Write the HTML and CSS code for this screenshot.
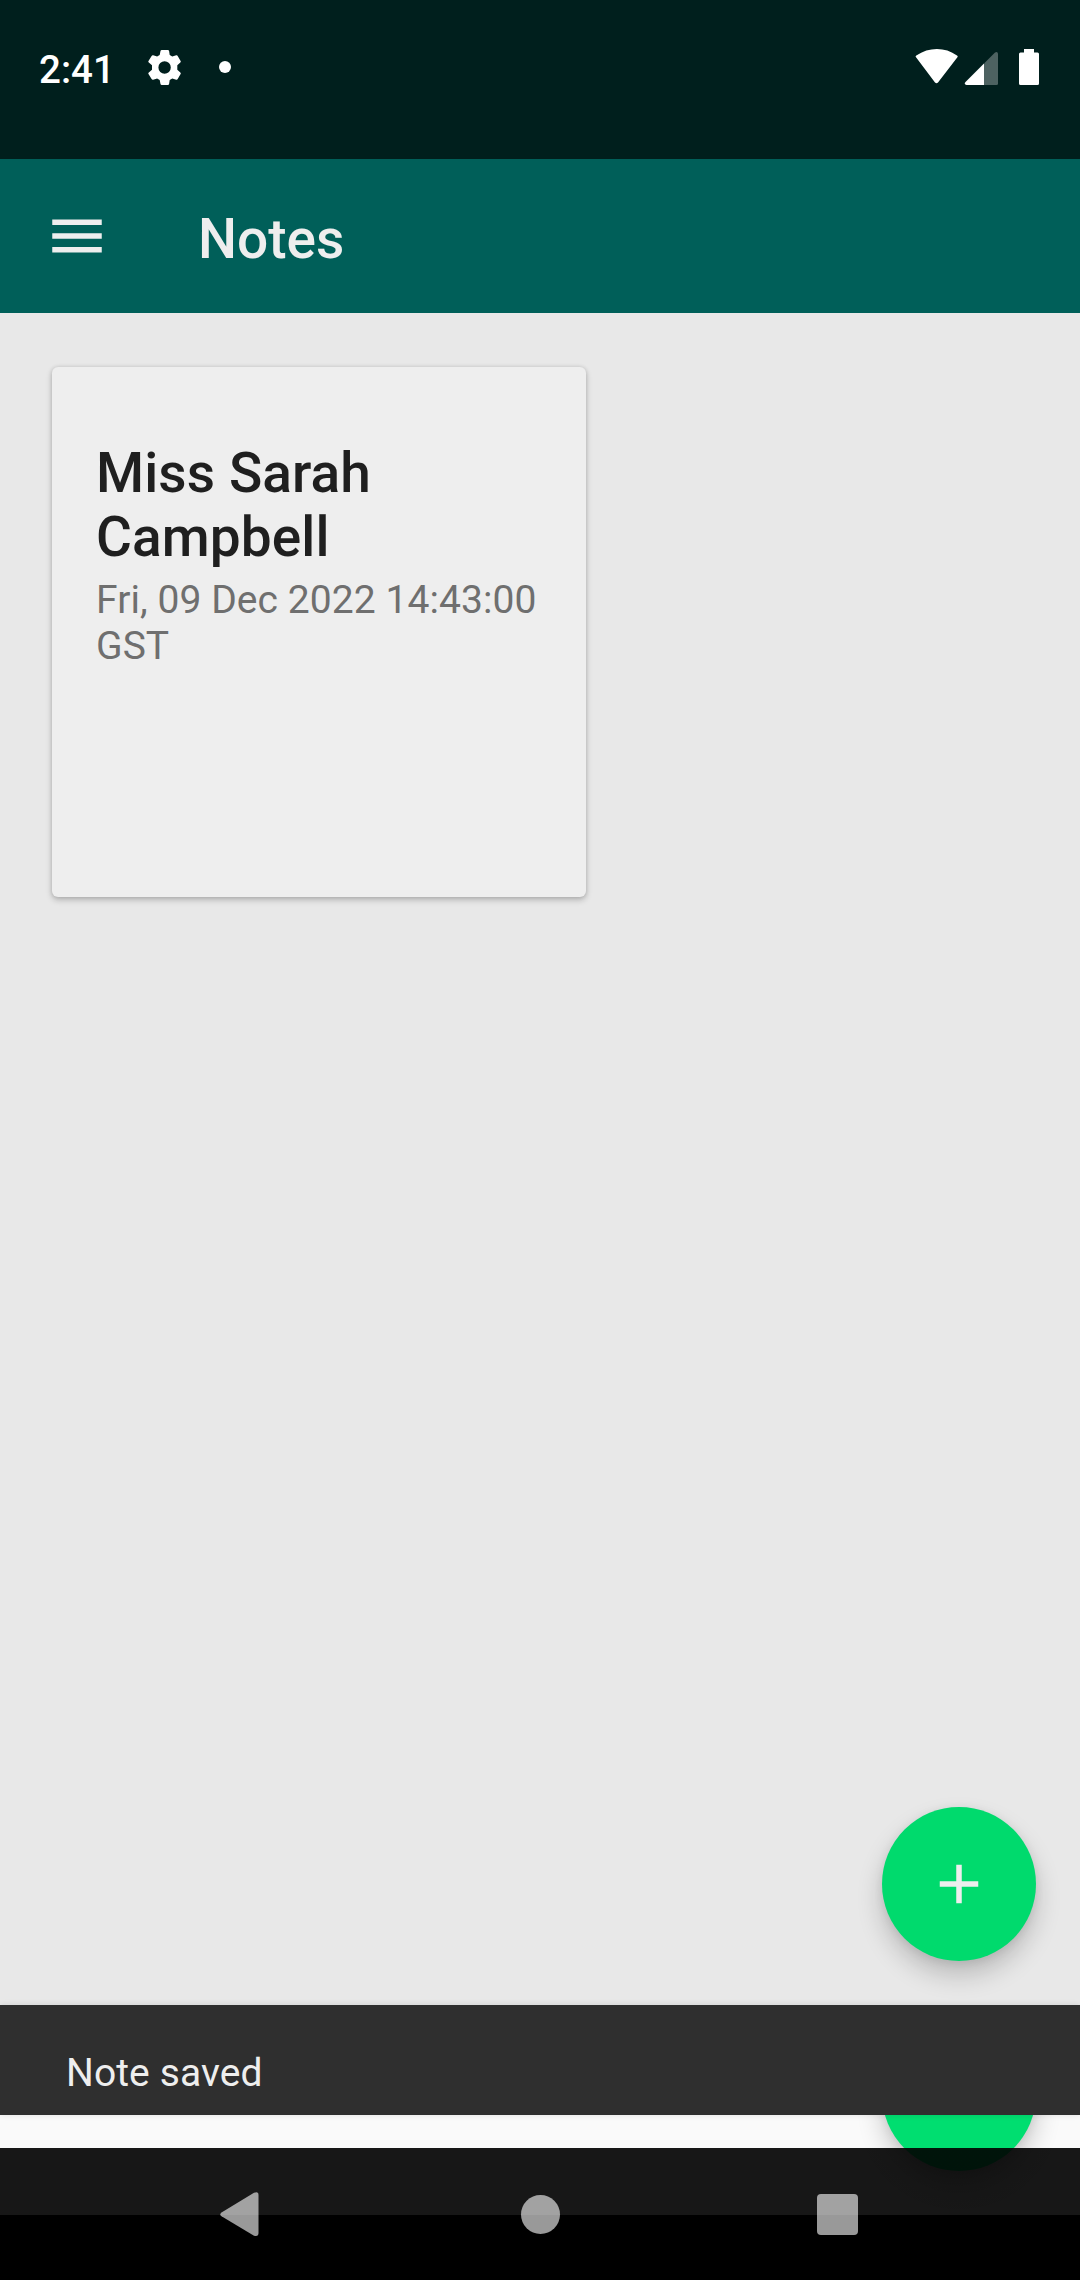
FILE: index.html
```html
<!DOCTYPE html>
<html lang="en">
<head>
<meta charset="utf-8">
<title>Notes</title>
<link rel="stylesheet" href="styles.css">
</head>
<body>
<div class="app">
  <div class="status">
    <span class="clock">2:41</span>
    <svg class="gear" viewBox="0 0 33 35"><path fill="#fff" fill-rule="evenodd" d="M12.500 1Q12.700 0 13.800 0H19.800Q20.900 0 21.100 1L21.700 5L24.300 6.600L28.200 5.300Q29.200 5 29.700 5.900L32.600 10.900Q33.100 11.800 32.300 12.500L29.300 15.200V19.800L32.300 22.500Q33.100 23.200 32.600 24.100L29.700 29.100Q29.200 30 28.200 29.700L24.300 28.400L21.700 30L21.100 34Q20.900 35 19.800 35H13.800Q12.700 35 12.500 34L11.700 30L9.100 28.400L5.200 29.700Q4.200 30 3.600 29.100L.5 24.100Q0 23.200.8 22.500L4 19.800V15.200L.8 12.500Q0 11.800.5 10.900L3.600 5.900Q4.200 5 5.200 5.300L9.100 6.600L11.700 5ZM16.600 11.300A6.200 6.200 0 1 0 16.600 23.700A6.200 6.200 0 1 0 16.600 11.300Z"/></svg>
    <span class="dot"></span>
    <svg class="signals" viewBox="0 0 124 38"><g fill="#fff"><path d="M1.200 9.600Q0 8.400 1.300 7.400C14-1.200 30-1.200 42 7.400Q43.300 8.400 42.200 9.600L23 34.400Q21.500 36 20 34.400Z"/><path d="M69 15.500V37H51.500Q48.500 36.200 50.500 34Z"/><path fill-opacity=".3" d="M69 15.500V37H81.500Q83 37 83 35.500V5.500Q82.500 3 80 4.500Z"/><path d="M109 1H119V4.500H122.500Q124 4.500 124 6V35.500Q124 37 122.500 37H105.500Q104 37 104 35.500V6Q104 4.500 105.500 4.500H109Z"/></g></svg>
  </div>
  <header class="toolbar">
    <svg class="menu" viewBox="0 0 24 24"><path fill="#eee" d="M3 18h18v-2H3v2zm0-5h18v-2H3v2zm0-7v2h18V6H3z"/></svg>
    <h1 class="heading">Notes</h1>
  </header>
  <main class="content">
    <article class="card">
      <h2 class="card-title">Miss Sarah Campbell</h2>
      <p class="card-date">Fri, 09 Dec 2022 14:43:00 GST</p>
    </article>
  </main>
  <div class="snackbar">Note saved</div>
  <div class="strip"></div>
  <nav class="nav">
    <svg class="back" viewBox="0 0 39 46"><path fill="#fff" fill-opacity=".6" d="M1.500 21.600L34 1.800Q38.500 0 38.500 4V42Q38.500 46 34 44.700L1.500 25.200Q-1 23.400 1.500 21.600Z"/></svg>
    <span class="home"></span>
    <span class="recent"></span>
  </nav>
  <button class="fab fab-main"><svg class="plus" viewBox="0 0 24 24"><path fill="#eee" d="M19 13h-6v6h-2v-6H5v-2h6V5h2v6h6v2z"/></svg></button>
  <div class="fab fab-under"></div>
</div>
</body>
</html>
```
FILE: styles.css
```css
* { box-sizing: border-box; }
body { margin: 0; font-family: Roboto, sans-serif; }
.app {
  position: relative;
  display: flex;
  flex-direction: column;
  width: 1080px;
  height: 2280px;
  overflow: hidden;
  background: #fafafa;
}
.status {
  display: flex;
  align-items: flex-start;
  height: 159px;
  padding: 48px 41px 0 39px;
  background: #001f1d;
  color: #fff;
}
.clock { width: 109px; font-size: 38.5px; font-weight: 500; line-height: 44px; }
.gear { width: 33px; height: 35px; margin-top: 2px; }
.dot { width: 12px; height: 12px; margin: 13px 0 0 38px; border-radius: 50%; background: #fff; }
.signals { width: 124px; height: 38px; margin-left: auto; }
.toolbar {
  display: flex;
  align-items: center;
  height: 154px;
  padding-left: 44px;
  background: #005f59;
}
.menu { width: 66px; height: 66px; }
.heading { margin: 6px 0 0 88px; color: #eee; font-size: 55px; font-weight: 500; line-height: 64px; }
.content { height: 1692px; padding: 54px 52px; background: #e8e8e8; }
.card {
  width: 534px;
  height: 530px;
  padding: 74px 44px 0;
  border-radius: 6px;
  background: #eee;
  box-shadow: 0 3px 6px rgba(0, 0, 0, .22), 0 0 4px rgba(0, 0, 0, .12);
}
.card-title { margin: 0; color: #1f1f1f; font-size: 55px; font-weight: 500; line-height: 64px; letter-spacing: .1px; }
.card-date { margin: 8px -10px 0 0; color: #6f6f6f; font-size: 39px; line-height: 46px; letter-spacing: .07px; }
.snackbar {
  position: relative;
  z-index: 2;
  height: 110px;
  padding: 45px 66px 0;
  background: #2f2f2f;
  box-shadow: 0 0 6px rgba(0, 0, 0, .1);
  color: #eee;
  font-size: 39px;
  line-height: 46px;
  letter-spacing: .1px;
}
.strip { height: 33px; }
.nav {
  position: relative;
  z-index: 2;
  display: flex;
  align-items: center;
  height: 132px;
  padding-left: 220px;
  background: linear-gradient(rgba(0, 0, 0, .91) 67px, #000 67px);
}
.back { width: 39px; height: 46px; }
.home { width: 39px; height: 39px; margin-left: 262px; border-radius: 50%; background: rgba(255, 255, 255, .6); }
.recent { width: 41px; height: 41px; margin-left: 257px; border-radius: 4px; background: rgba(255, 255, 255, .6); }
.fab {
  position: absolute;
  right: 44px;
  display: grid;
  place-items: center;
  width: 154px;
  height: 154px;
  padding: 0;
  border: 0;
  border-radius: 50%;
  box-shadow: 0 14px 26px rgba(0, 0, 0, .2), 0 2px 10px rgba(0, 0, 0, .08);
}
.fab-main { top: 1807px; z-index: 1; background: #00da6d; }
.fab-under { top: 2017px; background: #00de70; }
.plus { width: 66px; height: 66px; }
```
